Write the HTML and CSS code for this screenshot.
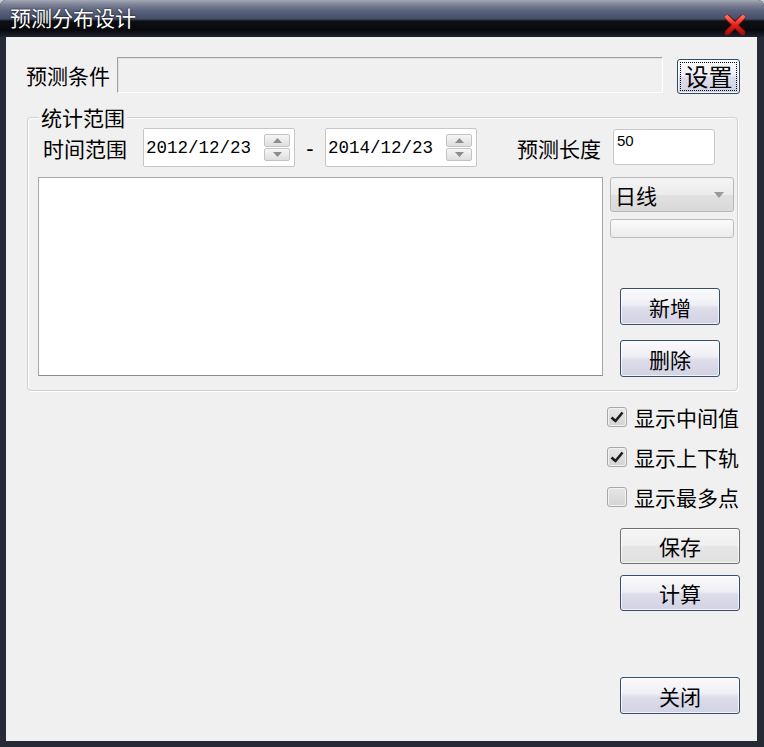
FILE: index.html
```html
<!DOCTYPE html>
<html lang="zh">
<head>
<meta charset="utf-8">
<title>预测分布设计</title>
<link rel="stylesheet" href="styles.css">
</head>
<body>
<div class="window">
  <div class="titlebar">
    <span class="title">预测分布设计</span>
    <svg class="close-x" width="20" height="20" viewBox="0 0 20 20">
      <defs>
        <linearGradient id="xg" x1="0" y1="0" x2="0" y2="1">
          <stop offset="0" stop-color="#ff6a5a"/>
          <stop offset="0.5" stop-color="#e0231c"/>
          <stop offset="1" stop-color="#a8100c"/>
        </linearGradient>
      </defs>
      <path d="M2 2 L18 18 M18 2 L2 18" stroke="#7a0c08" stroke-width="6" stroke-linecap="round"/>
      <path d="M2 2 L18 18 M18 2 L2 18" stroke="url(#xg)" stroke-width="4" stroke-linecap="round"/>
    </svg>
  </div>
  <div class="client">
    <div class="row-cond">
      <span class="lbl lbl-cond">预测条件</span>
      <div class="cond-input"></div>
      <button class="btn btn-set"><span class="focus-ring">设置</span></button>
    </div>

    <div class="group">
      <span class="group-title">统计范围</span>
      <div class="row-time">
        <span class="lbl lbl-time">时间范围</span>
        <div class="date">
          <span class="date-text">2012/12/23</span>
          <div class="spin">
            <span class="spin-btn"><svg width="9" height="5" viewBox="0 0 9 5"><path d="M0 5 L4.5 0 L9 5 Z" fill="#8c8c8c"/></svg></span>
            <span class="spin-btn"><svg width="9" height="5" viewBox="0 0 9 5"><path d="M0 0 L4.5 5 L9 0 Z" fill="#8c8c8c"/></svg></span>
          </div>
        </div>
        <span class="dash">-</span>
        <div class="date">
          <span class="date-text">2014/12/23</span>
          <div class="spin">
            <span class="spin-btn"><svg width="9" height="5" viewBox="0 0 9 5"><path d="M0 5 L4.5 0 L9 5 Z" fill="#8c8c8c"/></svg></span>
            <span class="spin-btn"><svg width="9" height="5" viewBox="0 0 9 5"><path d="M0 0 L4.5 5 L9 0 Z" fill="#8c8c8c"/></svg></span>
          </div>
        </div>
        <span class="lbl lbl-len">预测长度</span>
        <div class="len-input">50</div>
      </div>
      <div class="row-body">
        <div class="listbox"></div>
        <div class="side">
          <div class="combo">
            <span class="combo-text">日线</span>
            <svg width="10" height="6" viewBox="0 0 10 6"><path d="M0 0 L10 0 L5 6 Z" fill="#9a9a9a"/></svg>
          </div>
          <div class="bar"></div>
          <button class="btn btn-side btn-add">新增</button>
          <button class="btn btn-side btn-del">删除</button>
        </div>
      </div>
    </div>

    <div class="lower">
      <div class="check">
        <span class="box"><svg width="16" height="16" viewBox="0 0 16 16"><path d="M2.5 8.5 L6.5 12 L13.5 3.5" stroke="#1c1c1c" stroke-width="2.6" fill="none" stroke-linejoin="round"/></svg></span>
        <span class="check-text">显示中间值</span>
      </div>
      <div class="check">
        <span class="box"><svg width="16" height="16" viewBox="0 0 16 16"><path d="M2.5 8.5 L6.5 12 L13.5 3.5" stroke="#1c1c1c" stroke-width="2.6" fill="none" stroke-linejoin="round"/></svg></span>
        <span class="check-text">显示上下轨</span>
      </div>
      <div class="check">
        <span class="box"></span>
        <span class="check-text">显示最多点</span>
      </div>
      <button class="btn btn-low btn-plain btn-save">保存</button>
      <button class="btn btn-low btn-calc">计算</button>
      <button class="btn btn-low btn-close">关闭</button>
    </div>
  </div>
</div>
</body>
</html>
```

FILE: styles.css
```css
* { box-sizing: border-box; }

html, body {
  margin: 0;
  padding: 0;
  background: #c9ccd2;
}

body {
  font-family: "Noto Sans CJK SC", "Noto Sans", sans-serif;
  color: #000;
}

.window {
  width: 764px;
  height: 747px;
  background: #252a35;
  border-radius: 6px 6px 0 0;
  overflow: hidden;
  display: flex;
  flex-direction: column;
}

.titlebar {
  height: 37px;
  flex: none;
  display: flex;
  justify-content: space-between;
  align-items: flex-start;
  padding: 0 19px 0 10px;
  background: linear-gradient(to bottom,
    #a3a8b4 0px, #7a8094 5px, #5a627c 11px, #454d68 19px,
    #0d1015 21px, #08090c 30px, #1e2330 37px);
}

.title {
  color: #fff;
  font-size: 21px;
  line-height: 21px;
  margin-top: 7px;
  letter-spacing: 0;
  text-shadow: 0 0 2px #000;
}

.close-x {
  margin-top: 15px;
}

.client {
  margin: 0 7px 6px 6px;
  height: 704px;
  background: #f0f0f0;
  padding: 20px 0 0 20px;
  display: flex;
  flex-direction: column;
}

.lbl {
  font-size: 21px;
  line-height: 24px;
  white-space: nowrap;
}

/* row 1 */
.row-cond {
  display: flex;
  align-items: center;
  height: 36px;
}

.lbl-cond {
  width: 91px;
}

.cond-input {
  width: 546px;
  height: 36px;
  background: #f0f0f0;
  border: 1px solid #a0a0a0;
  border-right-color: #fff;
  border-bottom-color: #fff;
  box-shadow: inset 1px 1px 0 #e2e2e2;
}

.btn {
  font-family: "Noto Sans CJK SC", "Noto Sans", sans-serif;
  font-size: 21px;
  line-height: 24px;
  color: #000;
  padding: 0;
  border: 1px solid #34506a;
  border-radius: 3px;
  background: linear-gradient(to bottom, #fbfbfd 0%, #eeeef5 45%, #dcdcea 55%, #d2d2e4 100%);
  box-shadow: inset 0 0 0 1px rgba(255,255,255,0.7);
  display: flex;
  align-items: center;
  justify-content: center;
}

.btn-set {
  margin-left: 14px;
  width: 63px;
  height: 35px;
  margin-top: 2px;
  font-size: 24px;
  border-color: #2f4d6b;
  padding: 2px;
}

.focus-ring {
  width: 100%;
  height: 100%;
  border: 1px dotted #000;
  display: flex;
  align-items: center;
  justify-content: center;
  line-height: 26px;
}

/* group */
.group {
  position: relative;
  margin-top: 24px;
  margin-left: 1px;
  width: 711px;
  height: 274px;
  border: 1px solid #cdd1d4;
  border-radius: 4px;
  box-shadow: inset 1px 1px 0 #fff, 1px 1px 0 #fff;
  padding: 10px 0 0 10px;
}

.group-title {
  position: absolute;
  top: -12px;
  left: 11px;
  padding: 0 2px;
  background: #f0f0f0;
  font-size: 21px;
  line-height: 22px;
}

.row-time {
  display: flex;
  align-items: center;
  height: 39px;
  padding-left: 5px;
}

.lbl-time {
  width: 100px;
}

.date {
  width: 152px;
  height: 39px;
  background: #fff;
  border: 1px solid #c6c6c6;
  border-radius: 2px;
  display: flex;
  align-items: center;
  justify-content: space-between;
  padding: 0 4px 0 2px;
}

.date-text {
  font-family: "Liberation Mono", "DejaVu Sans Mono", monospace;
  font-size: 17.5px;
  line-height: 20px;
  letter-spacing: 0;
}

.spin {
  width: 26px;
  height: 27px;
  display: flex;
  flex-direction: column;
  gap: 1px;
}

.spin-btn {
  flex: 1;
  border: 1px solid #c4c4c4;
  border-radius: 2px;
  background: linear-gradient(to bottom, #f6f6f6, #dedede);
  display: flex;
  align-items: center;
  justify-content: center;
}

.dash {
  width: 30px;
  text-align: center;
  font-family: "Liberation Sans", sans-serif;
  font-size: 22px;
  line-height: 24px;
  margin-top: 2px;
}

.lbl-len {
  margin-left: 40px;
  width: 96px;
}

.len-input {
  width: 102px;
  height: 36px;
  background: #fff;
  border: 1px solid #c8c8c8;
  border-radius: 3px;
  font-family: "Liberation Sans", sans-serif;
  font-size: 15px;
  line-height: 18px;
  padding: 2px 0 0 3px;
  align-self: flex-start;
  margin-top: 1px;
}

.row-body {
  display: flex;
  margin-top: 10px;
}

.listbox {
  width: 565px;
  height: 199px;
  background: #fff;
  border: 1px solid #a6a6a6;
  border-bottom-color: #8c8c8c;
}

.side {
  margin-left: 7px;
  width: 124px;
  display: flex;
  flex-direction: column;
}

.combo {
  height: 35px;
  border: 1px solid #b8b8b8;
  border-radius: 3px;
  background: linear-gradient(to bottom, #f4f4f4 0%, #ececec 50%, #e0e0e0 51%, #d9d9d9 100%);
  display: flex;
  align-items: center;
  justify-content: space-between;
  padding: 0 9px 0 4px;
}

.combo-text {
  font-size: 21px;
  line-height: 24px;
}

.bar {
  margin-top: 7px;
  height: 19px;
  border: 1px solid #bcbcbc;
  border-radius: 3px;
  background: linear-gradient(to bottom, #fafafa, #ececec);
}

.btn-side {
  margin-left: 10px;
  width: 100px;
  height: 37px;
}

.btn-add { margin-top: 50px; }
.btn-del { margin-top: 15px; }

/* lower column */
.lower {
  margin-top: 6px;
  margin-left: 581px;
  display: flex;
  flex-direction: column;
}

.check {
  height: 40px;
  display: flex;
  align-items: center;
}

.box {
  width: 20px;
  height: 20px;
  border: 1px solid #a9a9a9;
  border-radius: 3px;
  background: linear-gradient(to bottom, #e6e6e6, #d4d4d4);
  box-shadow: inset 0 0 0 1px #f2f2f2;
  display: flex;
  align-items: center;
  justify-content: center;
}

.check-text {
  margin-left: 7px;
  font-size: 21px;
  line-height: 24px;
}

.btn-low {
  margin-left: 13px;
  width: 120px;
  height: 36px;
}

.btn-plain {
  border-color: #6e6e6e;
  background: linear-gradient(to bottom, #f4f4f4 0%, #efefef 50%, #e6e6e6 51%, #e0e0e0 100%);
}

.btn-save { margin-top: 11px; }
.btn-calc { margin-top: 11px; }
.btn-close { margin-top: 66px; height: 37px; }
```
